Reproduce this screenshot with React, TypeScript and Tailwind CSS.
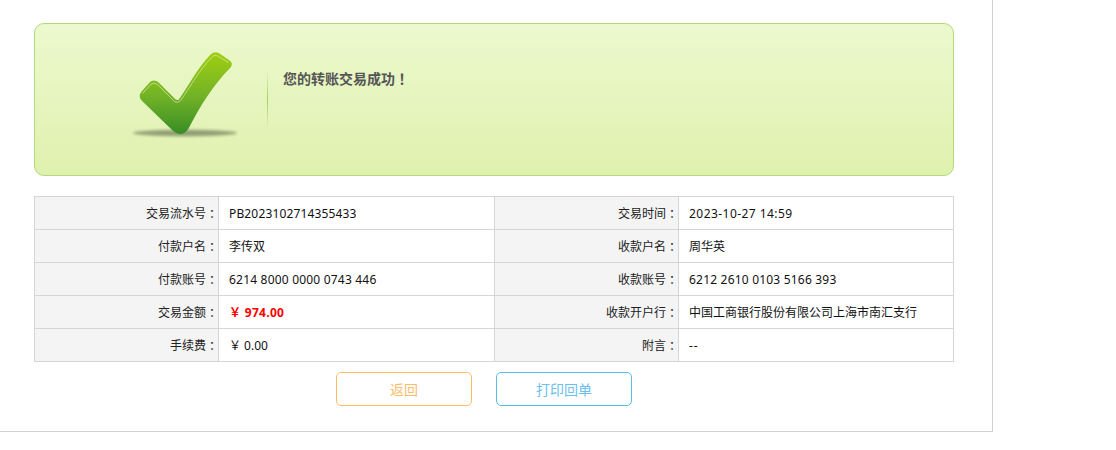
const font = { fontFamily: '"Noto Sans", "Noto Sans CJK SC", sans-serif' };
const tc = { fontFamily: '"Noto Sans CJK TC", sans-serif' };

type Row = [string, React.ReactNode, string, React.ReactNode];

const rows: Row[] = [
  [
    "交易流水号",
    <span className="tracking-[0.15px]">PB2023102714355433</span>,
    "交易时间",
    <span className="tracking-[0.45px]">2023-10-27 14:59</span>,
  ],
  ["付款户名", "李传双", "收款户名", "周华英"],
  [
    "付款账号",
    <span className="tracking-[0.2px]">6214 8000 0000 0743 446</span>,
    "收款账号",
    <span className="tracking-[0.2px]">6212 2610 0103 5166 393</span>,
  ],
  [
    "交易金额",
    <span className="font-bold tracking-[0.3px] text-[#ff0000]">￥ 974.00</span>,
    "收款开户行",
    "中国工商银行股份有限公司上海市南汇支行",
  ],
  ["手续费", <span>￥ 0.00</span>, "附言", <span className="tracking-[1px]">--</span>],
];

function Check() {
  return (
    <svg width="120" height="100" viewBox="125 45 120 100" className="shrink-0">
      <defs>
        <linearGradient id="g" x1="0" y1="0" x2="0" y2="1">
          <stop offset="0" stopColor="#a0cf12" />
          <stop offset="0.55" stopColor="#70b127" />
          <stop offset="1" stopColor="#388d25" />
        </linearGradient>
        <filter id="b" x="-20%" y="-100%" width="140%" height="300%">
          <feGaussianBlur stdDeviation="1.6" />
        </filter>
      </defs>
      <ellipse cx="185" cy="133" rx="52" ry="3.2" fill="#6f7a58" opacity="0.7" filter="url(#b)" />
      <g transform="translate(0.6 0.6)">
        <path
          d="M141 91 L149 82 Q153 78 158 82 L174 98 Q177 101 179 98 C190 82 198 66 210 54 Q214 50 219 53 L229 60 Q233 63 230 67 C212 85 200 105 188 128 Q181 138 172 130 L141 100 Q137 96 141 91 Z"
          fill="url(#g)"
        />
        <path
          d="M142 93 L150 84 Q153 81 157 84 L174 101 Q177 103 180 100 C191 84 199 69 211 57 Q214 53 218 56 L228 62"
          fill="none"
          stroke="#d3e89f"
          strokeWidth="1"
          opacity="0.75"
        />
      </g>
    </svg>
  );
}

export default function App() {
  return (
    <div className="h-[450px] w-[1116px] bg-white text-[12px] text-[#222]" style={font}>
      <div className="box-border h-[432px] w-[993px] border-r border-b border-[#d2d2d2] pl-[34px] pt-[23px]">
        <div className="flex h-[153px] w-[920px] rounded-[10px] border border-[#b5d97a] bg-gradient-to-b from-[#ecf9ce] to-[#dff1ae]">
          <div className="ml-[90px] mt-[21px] w-[142px]">
            <Check />
          </div>
          <div className="mt-[46px] h-[60px] w-px bg-gradient-to-b from-[#e6f5c4] via-[#a4cf5e] to-[#e4f4bd]" />
          <div className="ml-[15px] mt-[45px] text-[14px] font-bold leading-[18px] text-[#555]">
            您的转账交易成功<span style={tc}>！</span>
          </div>
        </div>

        <div className="mt-[20px] grid w-[920px] grid-cols-[184px_276px_184px_275px] border-t border-l border-[#d5d5d5]">
          {rows.map((r, i) =>
            r.map((c, j) =>
              j % 2 === 0 ? (
                <div
                  key={`${i}-${j}`}
                  className="box-border flex h-[33px] items-center justify-end border-r border-b border-[#d5d5d5] bg-[#f4f4f4] pt-[2px]"
                >
                  {c}
                  <span style={tc}>：</span>
                </div>
              ) : (
                <div
                  key={`${i}-${j}`}
                  className="box-border flex h-[33px] items-center whitespace-pre border-r border-b border-[#d5d5d5] pl-[10px] pt-[2px] text-[#111]"
                >
                  {c}
                </div>
              ),
            ),
          )}
        </div>

        <div className="mt-[10px] flex gap-[24px] pl-[302px]">
          <button className="h-[34px] w-[136px] rounded-[5px] border border-[#fbbe5e] bg-white text-[14px] text-[#fdbd6a]">
            返回
          </button>
          <button className="h-[34px] w-[136px] rounded-[5px] border border-[#55bdec] bg-white text-[14px] text-[#6cc0ee]">
            打印回单
          </button>
        </div>
      </div>
    </div>
  );
}
